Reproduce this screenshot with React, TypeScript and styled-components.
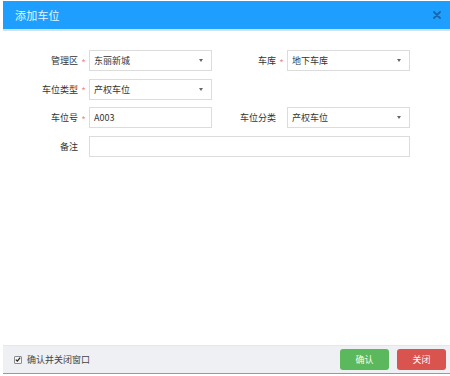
import React from "react";
import styled, { createGlobalStyle } from "styled-components";

const GlobalStyle = createGlobalStyle`
  html, body {
    margin: 0;
    padding: 0;
    background: #ffffff;
  }
  body {
    font-family: "Noto Sans CJK SC", "Noto Sans", sans-serif;
  }
`;

type Field = {
  label: string;
  required?: boolean;
  value: string;
  select?: boolean;
  wide?: boolean;
};

const fields: Field[] = [
  { label: "管理区", required: true, value: "东丽新城", select: true },
  { label: "车库", required: true, value: "地下车库", select: true },
  { label: "车位类型", required: true, value: "产权车位", select: true },
  { label: "", value: "" },
  { label: "车位号", required: true, value: "A003" },
  { label: "车位分类", value: "产权车位", select: true },
  { label: "备注", value: "", wide: true },
];

function AddParkingDialog(): JSX.Element {
  return (
    <Page>
      <GlobalStyle />
      <Window>
        <Header>
          <Title>添加车位</Title>
          <Close aria-label="close">
            <svg width="8" height="8" viewBox="0 0 8 8">
              <path
                d="M1 1 L7 7 M7 1 L1 7"
                stroke="#1668ad"
                strokeWidth="1.8"
                strokeLinecap="round"
              />
            </svg>
          </Close>
        </Header>

        <Body>
          <FormGrid>
            {fields.map((f, i) =>
              f.label === "" ? (
                <Spacer key={i} />
              ) : (
                <React.Fragment key={i}>
                  <Label>
                    <LabelText>{f.label}</LabelText>
                    <Star>{f.required ? "*" : ""}</Star>
                  </Label>
                  <Control $wide={f.wide}>
                    <Value>{f.value}</Value>
                    {f.select && <Caret />}
                  </Control>
                </React.Fragment>
              )
            )}
          </FormGrid>
        </Body>

        <Footer>
          <CheckRow>
            <CheckBox>
              <svg width="7" height="7" viewBox="0 0 7 7">
                <path
                  d="M1 3.6 L2.8 5.4 L6 1.4"
                  stroke="#222"
                  strokeWidth="1.5"
                  fill="none"
                />
              </svg>
            </CheckBox>
            <CheckText>确认并关闭窗口</CheckText>
          </CheckRow>
          <ButtonGroup>
            <Button $color="#5cb85c">确认</Button>
            <Button $color="#d9534f">关闭</Button>
          </ButtonGroup>
        </Footer>
      </Window>
    </Page>
  );
}

const Page = styled.div`
  width: 450px;
  height: 376px;
  padding: 1px 0 0 3px;
  box-sizing: border-box;
`;

const Window = styled.div`
  width: 447px;
  height: 373px;
  display: flex;
  flex-direction: column;
  background: #ffffff;
  border-bottom: 1px solid #9a9a9a;
  box-sizing: border-box;
`;

const Header = styled.div`
  height: 28px;
  flex: none;
  display: flex;
  align-items: center;
  justify-content: space-between;
  padding: 0 9px 0 12px;
  background: #1e9fff;
  border-bottom: 2px solid #cfe3f5;
`;

const Title = styled.span`
  color: #e9f5ff;
  font-size: 11px;
  letter-spacing: 0.2px;
`;

const Close = styled.span`
  display: flex;
  align-items: center;
`;

const Body = styled.div`
  flex: 1;
  padding: 19px 0 0 11px;
`;

const FormGrid = styled.div`
  display: grid;
  grid-template-columns: 75px 123px 75px 123px;
  grid-auto-rows: 21px;
  row-gap: 7.5px;
`;

const Spacer = styled.div`
  grid-column: span 2;
`;

const Label = styled.div`
  display: flex;
  align-items: center;
  justify-content: flex-end;
  color: #333;
  font-size: 9px;
`;

const LabelText = styled.span`
  white-space: nowrap;
`;

const Star = styled.span`
  width: 11px;
  text-align: center;
  color: #f08c8c;
  font-size: 10px;
  padding-top: 3px;
`;

const Control = styled.div<{ $wide?: boolean }>`
  grid-column: ${(p) => (p.$wide ? "span 3" : "span 1")};
  position: relative;
  display: flex;
  align-items: center;
  padding: 0 4px;
  border: 1px solid #dcdcdc;
  box-sizing: border-box;
  background: #fff;
`;

const Value = styled.span`
  color: #333;
  font-size: 9px;
`;

const Caret = styled.span`
  position: absolute;
  right: 8px;
  top: 8px;
  width: 0;
  height: 0;
  border-left: 2.5px solid transparent;
  border-right: 2.5px solid transparent;
  border-top: 3px solid #666;
`;

const Footer = styled.div`
  height: 27px;
  flex: none;
  display: flex;
  align-items: center;
  justify-content: space-between;
  padding: 0 4px 0 11px;
  background: #eef0f3;
  border-top: 1px solid #e3e6ea;
`;

const CheckRow = styled.label`
  display: flex;
  align-items: center;
  gap: 5px;
`;

const CheckBox = styled.span`
  width: 8px;
  height: 8px;
  display: flex;
  align-items: center;
  justify-content: center;
  border: 1px solid #8c8c8c;
  border-radius: 1px;
  background: #f4f4f4;
  box-sizing: border-box;
`;

const CheckText = styled.span`
  color: #444;
  font-size: 9px;
`;

const ButtonGroup = styled.div`
  display: flex;
  gap: 8px;
`;

const Button = styled.button<{ $color: string }>`
  width: 49px;
  height: 21px;
  padding: 0;
  border: none;
  border-radius: 3px;
  background: ${(p) => p.$color};
  color: #f4fff4;
  font-family: inherit;
  font-size: 9px;
`;

export default function App(): JSX.Element {
  return <AddParkingDialog />;
}
